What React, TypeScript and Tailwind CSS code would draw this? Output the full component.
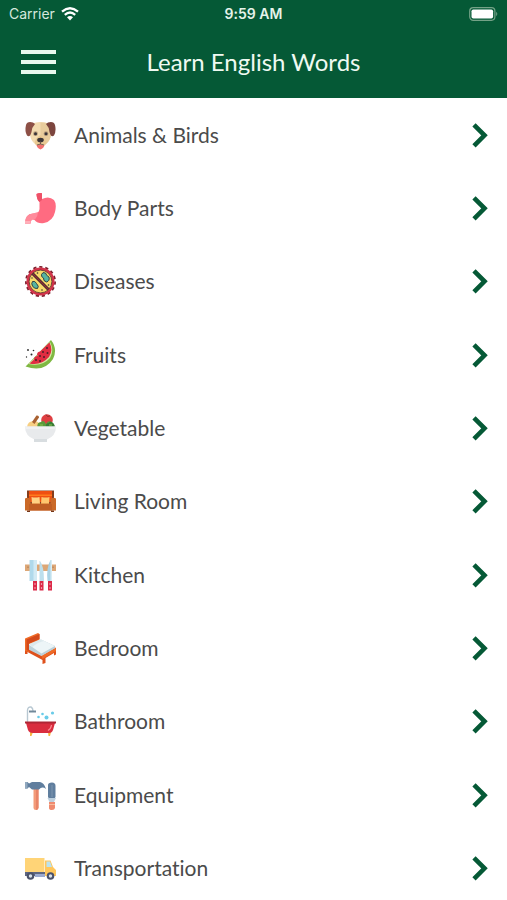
import type { ReactNode } from "react";

function Icon({ children }: { children: ReactNode }) {
  return (
    <svg viewBox="0 0 32 32" className="size-8 shrink-0" aria-hidden="true">
      {children}
    </svg>
  );
}

const Dog = () => (
  <Icon>
    <path d="M8 4.500Q16 1.500 24.500 4.500L27 16Q26 22 22 25L16.500 29L11 25Q7 22 6 16Z" fill="#f3dbb0" />
    <path d="M16.500 3.500Q21 3 24.500 4.500L27 16Q26 22 22 25L16.500 28Z" fill="#e8cc9c" />
    <path d="M9 3.500Q3 2 2 6Q.500 12 3 16.500Q6 19 7.500 13Q8 8 11 5Z" fill="#8d5046" />
    <path d="M24 3.500Q30 2 31 6Q32.500 12 30 16.500Q27 19 25.500 13Q25 8 22 5Z" fill="#7c453e" />
    <path d="M12 24H21Q20.500 29 16.500 30.500Q12.500 29 12 24Z" fill="#f4706f" />
    <path d="M16.500 16Q10 20 11 25Q14 27.500 16.500 25Q19 27.500 22 25Q23 20 16.500 16Z" fill="#e9c992" />
    <ellipse cx="16.500" cy="21" rx="3.300" ry="2.300" fill="#3b3537" />
    <path d="M16.500 22V25L13 26M16.500 25L20 26" stroke="#5d4a42" fill="none" strokeWidth=".8" />
    <circle cx="11.500" cy="14.700" r="2.400" fill="#b79d7b" />
    <circle cx="22" cy="14.700" r="2.400" fill="#b79d7b" />
    <circle cx="11.500" cy="14.700" r="1.500" fill="#383338" />
    <circle cx="22" cy="14.700" r="1.500" fill="#383338" />
  </Icon>
);

const Stomach = () => (
  <Icon>
    <path d="M12.500 2Q15 .5 18 1.200V7Q25 3.500 30 8Q33 12 31 20Q29 29 20 31Q14 32 10.500 28Q7 26 6.500 31.500H1Q1 22 9 21.500Q15 22 15.500 17V10Q12.500 7 12.500 2Z" fill="#ff6b81" />
    <path d="M12.500 2Q15 .5 18 1.200V8L15.500 10Q12.500 7 12.500 2Z" fill="#ee5168" />
    <path d="M1 31.500Q1 22 9 21.500L14 20Q14 24 11 27.500Q7 26 6.500 31.500Z" fill="#ff8b9b" />
    <path d="M1 29H6.500V31.500H1Z" fill="#ffb0ba" />
  </Icon>
);

const Germ = () => (
  <Icon>
    <circle cx="16.500" cy="16.500" r="14.600" fill="none" stroke="#7d1f2c" strokeWidth="1.800" strokeDasharray="3.200 2.900" />
    <circle cx="16.500" cy="16.500" r="12.800" fill="#f8d969" stroke="#d2334a" strokeWidth="2.400" />
    <circle cx="16.500" cy="16.500" r="11.400" fill="none" stroke="#51242c" strokeWidth=".8" />
    <path d="M17.500 9.500Q18.500 6.500 21.500 8Q22.500 11 25 12Q26 16 22.500 17Q19 16 19.500 13Q17 12 17.500 9.500Z" fill="#55b5a0" stroke="#28353c" strokeWidth=".9" />
    <path d="M8.500 16.500Q11 15.500 12.500 18.500Q15.500 21.500 13.500 23.500Q10 24 8.500 21Q7 18.500 8.500 16.500Z" fill="#55b5a0" stroke="#28353c" strokeWidth=".9" />
    <path d="M8.500 8.500L24.500 24.500" stroke="#38262b" strokeWidth="3" />
    <path d="M8.500 8.500L24.500 24.500" stroke="#8f3038" strokeWidth="1.200" />
    <g fill="#343335"><circle cx="13.500" cy="8" r=".8" /><circle cx="24.500" cy="20" r=".8" /><circle cx="18" cy="25" r=".8" /><circle cx="8" cy="13" r=".7" /></g>
  </Icon>
);

const Watermelon = () => (
  <Icon>
    <path d="M27 1Q34 10 29 20Q20 34 1.500 27.500L6 23Z" fill="#7fb842" />
    <path d="M26 3Q30.500 11 26 19Q18 28 4.500 25Z" fill="#d9e7a5" />
    <path d="M25.500 3.500Q29.500 11 25 18Q17 27 5.500 24.500L10 20.500Q10 17 13.500 17Q12 13 16 12.500Z" fill="#e12d42" />
    <g fill="#4d2028"><circle cx="23" cy="9" r="1" /><circle cx="19" cy="13" r="1" /><circle cx="23.500" cy="14" r="1" /><circle cx="16" cy="17" r="1" /><circle cx="20" cy="18" r="1" /><circle cx="12" cy="21" r="1" /><circle cx="16" cy="22" r="1" /></g>
    <g fill="#292929"><circle cx="4" cy="11" r=".9" /><circle cx="9.500" cy="11.500" r=".8" /><circle cx="7.500" cy="15.500" r="1" /><circle cx="2.500" cy="18" r=".7" /></g>
  </Icon>
);

const Salad = () => (
  <Icon>
    <path d="M3 15Q3.500 9 10 9Q15 8 17 16Z" fill="#f7cf83" />
    <path d="M8 10L12.500 3.500Q15 3 15 5.500L10.500 12Z" fill="#a96232" />
    <circle cx="23" cy="8" r="5.800" fill="#df3f42" />
    <path d="M22 2.500L23.500 4.500L26 4" fill="none" stroke="#8e302d" />
    <path d="M13.500 16Q12.500 10 17 10Q20 7.500 22 12Q24 8 27 10Q31 11 30 16Z" fill="#5b9a3b" />
    <path d="M22 16Q21 11 25 11Q26 8 29 11Q32 14 30 16Z" fill="#397d35" />
    <path d="M16 13H19M25 13H28" stroke="#8cc551" strokeWidth="1.200" />
    <path d="M1 14.500H32Q32 24 23 27.500V28H10.500V27.500Q1 24 1 14.500Z" fill="#e8eaec" />
    <path d="M10 27H23V30H10Z" fill="#d8dde0" />
    <path d="M1 14.500H32V17H1Z" fill="#f0f1f2" />
  </Icon>
);

const Sofa = () => (
  <Icon>
    <path d="M3 5.500H30V20H3Z" fill="#843d1d" />
    <path d="M5 6H28V17H5Z" fill="#ef4f11" />
    <path d="M5 9.500H28V11H5Z" fill="#ff7a1c" />
    <path d="M7.500 12Q11 13 15.500 12L16 19H8Z" fill="#ffd284" />
    <path d="M17.500 12Q22 13 25.500 12L25 19H17Z" fill="#ffc66e" />
    <path d="M1 13.500Q4 12 6.500 14V18.500H26.500V14Q29 12 32 13.500V25.500H1Z" fill="#cb6a28" />
    <path d="M5 19H28V25.500H5Z" fill="#c05e24" />
    <path d="M3 25.500H6V27H3ZM27 25.500H30V27H27Z" fill="#743618" />
  </Icon>
);

const Knives = () => (
  <Icon>
    <path d="M1 5.500H32V12H1Z" fill="#dda776" />
    <path d="M4 7.500V9M29 7.500V9" stroke="#a87652" />
    <path d="M5.500 1H13V22H5.500Z" fill="#b0d9eb" />
    <path d="M9.500 1H13V22H9.500Z" fill="#d2eaf4" />
    <path d="M16 2Q20 7 20 22H15.500V2Z" fill="#bddfed" />
    <path d="M26.500 1Q22 9 23.500 22H28V1Z" fill="#a9d3e6" />
    <path d="M26.500 1V22H28V1Z" fill="#d9edf4" />
    <path d="M9 22H13V31.500H9ZM15.500 22H19.500V31.500H15.500ZM24 22H28V31.500H24Z" fill="#dc2948" />
    <g fill="#f7d9dc"><circle cx="11" cy="25" r=".7" /><circle cx="17.500" cy="25" r=".7" /><circle cx="26" cy="25" r=".7" /><circle cx="11" cy="29" r=".7" /><circle cx="17.500" cy="29" r=".7" /><circle cx="26" cy="29" r=".7" /></g>
  </Icon>
);

const Bed = () => (
  <Icon>
    <path d="M1 17L4 16L18 24L30 16.500L32 15.500V22.500L30 23.500V21L21.500 26V31L18.500 32V28L3.500 20V22H1Z" fill="#df511c" />
    <path d="M4.500 13L17 7.500L31 14V16.500L17.500 24L4.500 17.500Z" fill="#bdd1d9" />
    <path d="M4.500 12.500L17 7.500L31 14L17.500 21.500Z" fill="#edf5f7" />
    <path d="M5.500 12.500Q11 8 16 7.500L20 9Q13 10.500 8.500 15Z" fill="#dce9ed" />
    <path d="M1 6.500L14 1L15.500 2V7.500L5 12V20L1 19Z" fill="#ef6b27" />
    <path d="M2.500 7.500L15.500 2V7L5 11.500V19L2.500 18Z" fill="#d44a1b" />
    <path d="M17.500 24L31 16.500L32 16V19L18.500 27Z" fill="#ef6b27" />
  </Icon>
);

const Bath = () => (
  <Icon>
    <path d="M3.500 18V5Q4 1.500 7 2Q9 3 9 6" fill="none" stroke="#b8c8d2" strokeWidth="1.400" />
    <path d="M5 6.500H12" stroke="#71899a" strokeWidth="2" />
    <g fill="#69cbe8"><circle cx="14.500" cy="12" r="1.300" /><circle cx="18.500" cy="9" r="1.300" /><circle cx="22.500" cy="12.500" r="2" /><circle cx="28.500" cy="8" r="1.600" /></g>
    <path d="M6 27L9 27L7.500 31H6ZM24 27H27L26 31H24.500Z" fill="#f6b541" />
    <path d="M2 18H31L29 25Q28 28 25 28H9Q5 28 4 25Z" fill="#d92d3e" />
    <path d="M1 16.500H32V18.500H1Z" fill="#ae2635" />
    <path d="M27.500 20Q27 24 24 25.500" fill="none" stroke="#fb8790" strokeWidth="1.200" />
  </Icon>
);

const Tools = () => (
  <Icon>
    <path d="M9.500 9H14.500V29Q14 31 12 31Q9.500 31 9.500 29Z" fill="#f39b79" />
    <path d="M12 9H14.500V29Q14 31 12 31Z" fill="#e88468" />
    <path d="M1 3H3.500L5 4.500L8 3H16Q20 3.500 22 10Q18 7 15 10.500H8L5 8L3.500 9.500H1Z" fill="#607e9e" />
    <path d="M1 3H3.500V9.500H1Z" fill="#91a8be" />
    <path d="M24 6Q24 3.500 28 3.500Q31.500 3.500 31.500 7V18L29.500 21H26L24 18Z" fill="#607e9e" />
    <path d="M28 6V18" stroke="#7893ad" strokeWidth="1.200" />
    <path d="M23.500 19H32L30 23H25.500Z" fill="#bdcfdd" />
    <path d="M25 23H31V29Q30.500 31 28 31Q25 31 25 29Z" fill="#ef8b70" />
    <path d="M25 25.500H31" stroke="#f8bd9e" />
  </Icon>
);

const Truck = () => (
  <Icon>
    <path d="M1 6H20.500V24H1Z" fill="#ffd477" />
    <path d="M1 20H21V24H1Z" fill="#5e6681" />
    <path d="M21 8.500H26.500L29 15L32 18V24H21Z" fill="#ffc65b" />
    <path d="M22.500 9.500H26L28 15H22.500Z" fill="#b9e2ef" />
    <path d="M11 22H21V25H11Z" fill="#9baad0" />
    <circle cx="6.500" cy="24" r="3.800" fill="#4b526a" />
    <circle cx="26.500" cy="24" r="3.800" fill="#4b526a" />
    <circle cx="6.500" cy="24" r="1.700" fill="#d9e1e9" />
    <circle cx="26.500" cy="24" r="1.700" fill="#d9e1e9" />
  </Icon>
);

const categories = [
  { name: "Animals & Birds", Art: Dog },
  { name: "Body Parts", Art: Stomach },
  { name: "Diseases", Art: Germ },
  { name: "Fruits", Art: Watermelon },
  { name: "Vegetable", Art: Salad },
  { name: "Living Room", Art: Sofa },
  { name: "Kitchen", Art: Knives },
  { name: "Bedroom", Art: Bed },
  { name: "Bathroom", Art: Bath },
  { name: "Equipment", Art: Tools },
  { name: "Transportation", Art: Truck },
];

function StatusBar() {
  return (
    <div className="grid h-7 grid-cols-3 items-center px-[9px] font-['Inter',sans-serif] text-sm">
      <div className="flex items-center gap-[6px] text-[#d5e8dd]">
        <span>Carrier</span>
        <svg viewBox="0 0 18 14" className="h-[14px] w-[18px]" aria-hidden="true">
          <path d="M1 4.600Q9-2.200 17 4.600M3.800 7.800Q9 3.300 14.200 7.800" fill="none" stroke="#fff" strokeWidth="2.300" />
          <path d="M6 10.300Q9 7.800 12 10.300L9 13.500Z" fill="#fff" />
        </svg>
      </div>
      <span className="text-center font-semibold text-[#e5f3ea]">9:59 AM</span>
      <svg viewBox="0 0 30 14" className="h-[14px] w-[30px] justify-self-end" aria-hidden="true">
        <rect x="1.700" y=".7" width="25.200" height="12.600" rx="3.500" fill="none" stroke="#74a287" strokeWidth="1.200" />
        <rect x="3.500" y="2.500" width="21.600" height="9" rx="1.800" fill="#fff" />
        <path d="M28.200 4.800Q30.400 7 28.200 9.200Z" fill="#74a287" />
      </svg>
    </div>
  );
}

export default function App() {
  return (
    <div className="flex h-screen flex-col bg-white font-['Lato',sans-serif] [font-variant-ligatures:none]">
      <header className="shrink-0 bg-[#055936] pb-0.5 text-white">
        <StatusBar />
        <div className="grid h-[68px] grid-cols-[36px_1fr_36px] items-center px-5">
          <button type="button" aria-label="Open menu" className="flex h-9 flex-col items-end justify-center gap-[6px]">
            <span className="h-[4px] w-[35px] bg-[#e9f8ee]" />
            <span className="h-[4px] w-[35px] bg-[#e9f8ee]" />
            <span className="h-[4px] w-[35px] bg-[#e9f8ee]" />
          </button>
          <h1 className="text-center text-2xl text-[#effaf2]">Learn English Words</h1>
        </div>
      </header>
      <main className="min-h-0 flex-1 overflow-y-auto [scrollbar-width:none]">
        <ul>
          {categories.map(({ name, Art }) => (
            <li key={name} className="nth-[3n]:mb-px">
              <button type="button" className="flex h-[73px] w-full items-center gap-[18px] pr-[18px] pl-6 text-left text-[21px] text-[#4b4b4b]">
                <Art />
                <span className="flex-1">{name}</span>
                <svg viewBox="0 0 18 26" className="h-[26px] w-[18px] shrink-0" aria-hidden="true">
                  <path d="M3 2.800L13.500 13.300L3 23.800" fill="none" stroke="#055936" strokeWidth="4.600" />
                </svg>
              </button>
            </li>
          ))}
        </ul>
      </main>
    </div>
  );
}
